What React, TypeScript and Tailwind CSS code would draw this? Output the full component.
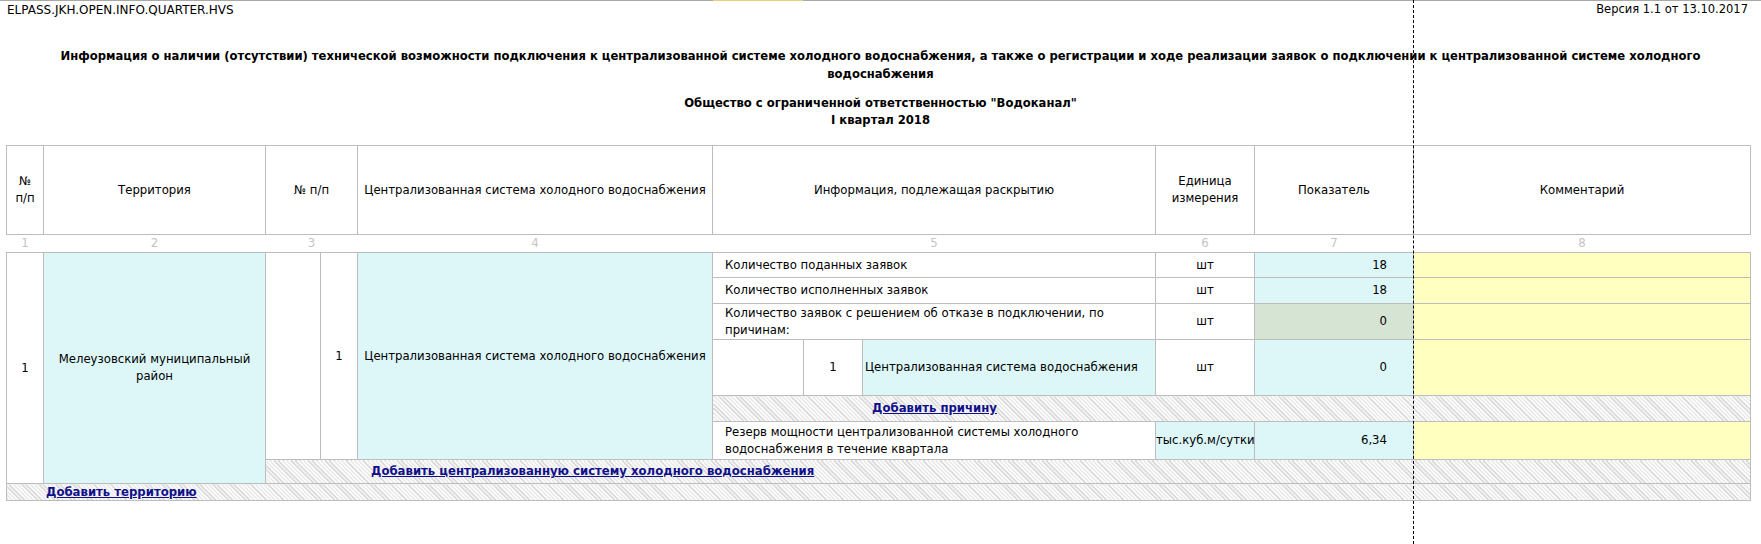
const font = 'font-["DejaVu_Sans",sans-serif]';
const grid = 'border border-[#bdbdbd]';
const cyan = 'bg-[#ddf7f9]';
const yellow = 'bg-[#ffffc0]';
const green = 'bg-[#d6e4d3]';
const hatch = 'bg-[image:repeating-linear-gradient(45deg,#cfcfcf_0_1px,#ffffff_1px_3px)]';
const link = 'font-bold underline text-[#10108a] cursor-pointer';

const colWidths = [37, 222, 55, 37, 355, 91, 59, 293, 99, 159, 337];

function HeaderCell({ children, span = 1 }: { children: React.ReactNode; span?: number }) {
  return (
    <th colSpan={span} className={`${grid} text-center align-middle font-normal px-1`}>
      {children}
    </th>
  );
}

function MetricRow({
  label,
  unit,
  value,
  valueBg = cyan,
  height,
}: {
  label: React.ReactNode;
  unit: string;
  value: string;
  valueBg?: string;
  height: string;
}) {
  return (
    <>
      <td colSpan={3} className={`${grid} bg-white pl-[12px] align-middle`}>{label}</td>
      <td className={`${grid} bg-white text-center align-middle`}>{unit}</td>
      <td className={`${grid} ${valueBg} text-right pr-[26px] align-middle`}>{value}</td>
      <td className={`${grid} ${yellow} ${height}`} />
    </>
  );
}

export default function App() {
  const colNums = ['1', '2', '3', '4', '5', '6', '7', '8'];
  const colSpans = [1, 1, 2, 1, 3, 1, 1, 1];

  return (
    <div className={`relative h-[544px] w-[1761px] overflow-hidden bg-white text-black ${font}`}>
      <div className="flex h-px">
        <div className="w-[713px] bg-[#a8a8a8]" />
        <div className="w-[90px] bg-[#e9cf7a]" />
        <div className="flex-1 bg-[#a8a8a8]" />
      </div>
      <div className="flex h-[18px] items-center justify-between pl-[7px] pr-[13px]">
        <span className="text-[12px]">ELPASS.JKH.OPEN.INFO.QUARTER.HVS</span>
        <span className="text-[11.5px]">Версия 1.1 от 13.10.2017</span>
      </div>

      <div className="mt-[28px] px-[6px] text-center text-[11.6px] font-bold leading-[18px]">
        <div className="whitespace-nowrap">
          Информация о наличии (отсутствии) технической возможности подключения к централизованной системе холодного водоснабжения, а также о регистрации и ходе реализации заявок о подключении к централизованной системе холодного
        </div>
        <div>водоснабжения</div>
      </div>

      <div className="mt-[12px] text-center text-[11.6px] font-bold leading-[17px]">
        <div>Общество с ограниченной ответственностью "Водоканал"</div>
        <div>I квартал 2018</div>
      </div>

      <table className="mt-[16px] ml-[6px] w-[1744px] table-fixed border-collapse text-[11.7px] leading-[17px]">
        <colgroup>
          {colWidths.map((w, i) => (
            <col key={i} style={{ width: w }} />
          ))}
        </colgroup>
        <thead>
          <tr className="h-[89px]">
            <HeaderCell>
              №
              <br />
              п/п
            </HeaderCell>
            <HeaderCell>Территория</HeaderCell>
            <HeaderCell span={2}>№ п/п</HeaderCell>
            <HeaderCell>Централизованная система холодного водоснабжения</HeaderCell>
            <HeaderCell span={3}>Информация, подлежащая раскрытию</HeaderCell>
            <HeaderCell>Единица измерения</HeaderCell>
            <HeaderCell>Показатель</HeaderCell>
            <HeaderCell>Комментарий</HeaderCell>
          </tr>
          <tr className="h-[18px]">
            {colNums.map((n, i) => (
              <th key={n} colSpan={colSpans[i]} className="text-center align-middle font-normal text-[#c4c4c4]">
                {n}
              </th>
            ))}
          </tr>
        </thead>
        <tbody>
          <tr className="h-[25px]">
            <td rowSpan={7} className={`${grid} bg-white text-center align-middle`}>1</td>
            <td rowSpan={7} className={`${grid} ${cyan} text-center align-middle`}>
              Мелеузовский муниципальный
              <br />
              район
            </td>
            <td rowSpan={6} className={`${grid} bg-white`} />
            <td rowSpan={6} className={`${grid} bg-white text-center align-middle`}>1</td>
            <td rowSpan={6} className={`${grid} ${cyan} text-center align-middle`}>
              Централизованная система холодного водоснабжения
            </td>
            <MetricRow label="Количество поданных заявок" unit="шт" value="18" height="h-[25px]" />
          </tr>
          <tr className="h-[26px]">
            <MetricRow label="Количество исполненных заявок" unit="шт" value="18" height="h-[26px]" />
          </tr>
          <tr className="h-[36px]">
            <MetricRow
              label={
                <>
                  Количество заявок с решением об отказе в подключении, по
                  <br />
                  причинам:
                </>
              }
              unit="шт"
              value="0"
              valueBg={green}
              height="h-[36px]"
            />
          </tr>
          <tr className="h-[56px]">
            <td className={`${grid} bg-white`} />
            <td className={`${grid} bg-white text-center align-middle`}>1</td>
            <td className={`${grid} ${cyan} pl-[2px] align-middle`}>Централизованная система водоснабжения</td>
            <td className={`${grid} bg-white text-center align-middle`}>шт</td>
            <td className={`${grid} ${cyan} text-right pr-[26px] align-middle`}>0</td>
            <td className={`${grid} ${yellow}`} />
          </tr>
          <tr className="h-[26px]">
            <td colSpan={6} className={`${grid} ${hatch} p-0 align-middle`}>
              <div className="w-[443px] text-center">
                <span className={link}>Добавить причину</span>
              </div>
            </td>
          </tr>
          <tr className="h-[38px]">
            <td colSpan={3} className={`${grid} bg-white pl-[12px] align-middle`}>
              Резерв мощности централизованной системы холодного
              <br />
              водоснабжения в течение квартала
            </td>
            <td className={`${grid} ${cyan} whitespace-nowrap text-center align-middle`}>тыс.куб.м/сутки</td>
            <td className={`${grid} ${cyan} text-right pr-[26px] align-middle`}>6,34</td>
            <td className={`${grid} ${yellow}`} />
          </tr>
          <tr className="h-[24px]">
            <td colSpan={9} className={`${grid} ${hatch} pl-[105px] align-middle`}>
              <span className={link}>Добавить централизованную систему холодного водоснабжения</span>
            </td>
          </tr>
          <tr className="h-[17px]">
            <td colSpan={11} className={`${grid} ${hatch} pl-[39px] align-middle leading-[15px]`}>
              <span className={link}>Добавить территорию</span>
            </td>
          </tr>
        </tbody>
      </table>

      {/* page break marker */}
      <div className="absolute left-[1413px] top-0 h-full border-l border-dashed border-black" />
    </div>
  );
}
